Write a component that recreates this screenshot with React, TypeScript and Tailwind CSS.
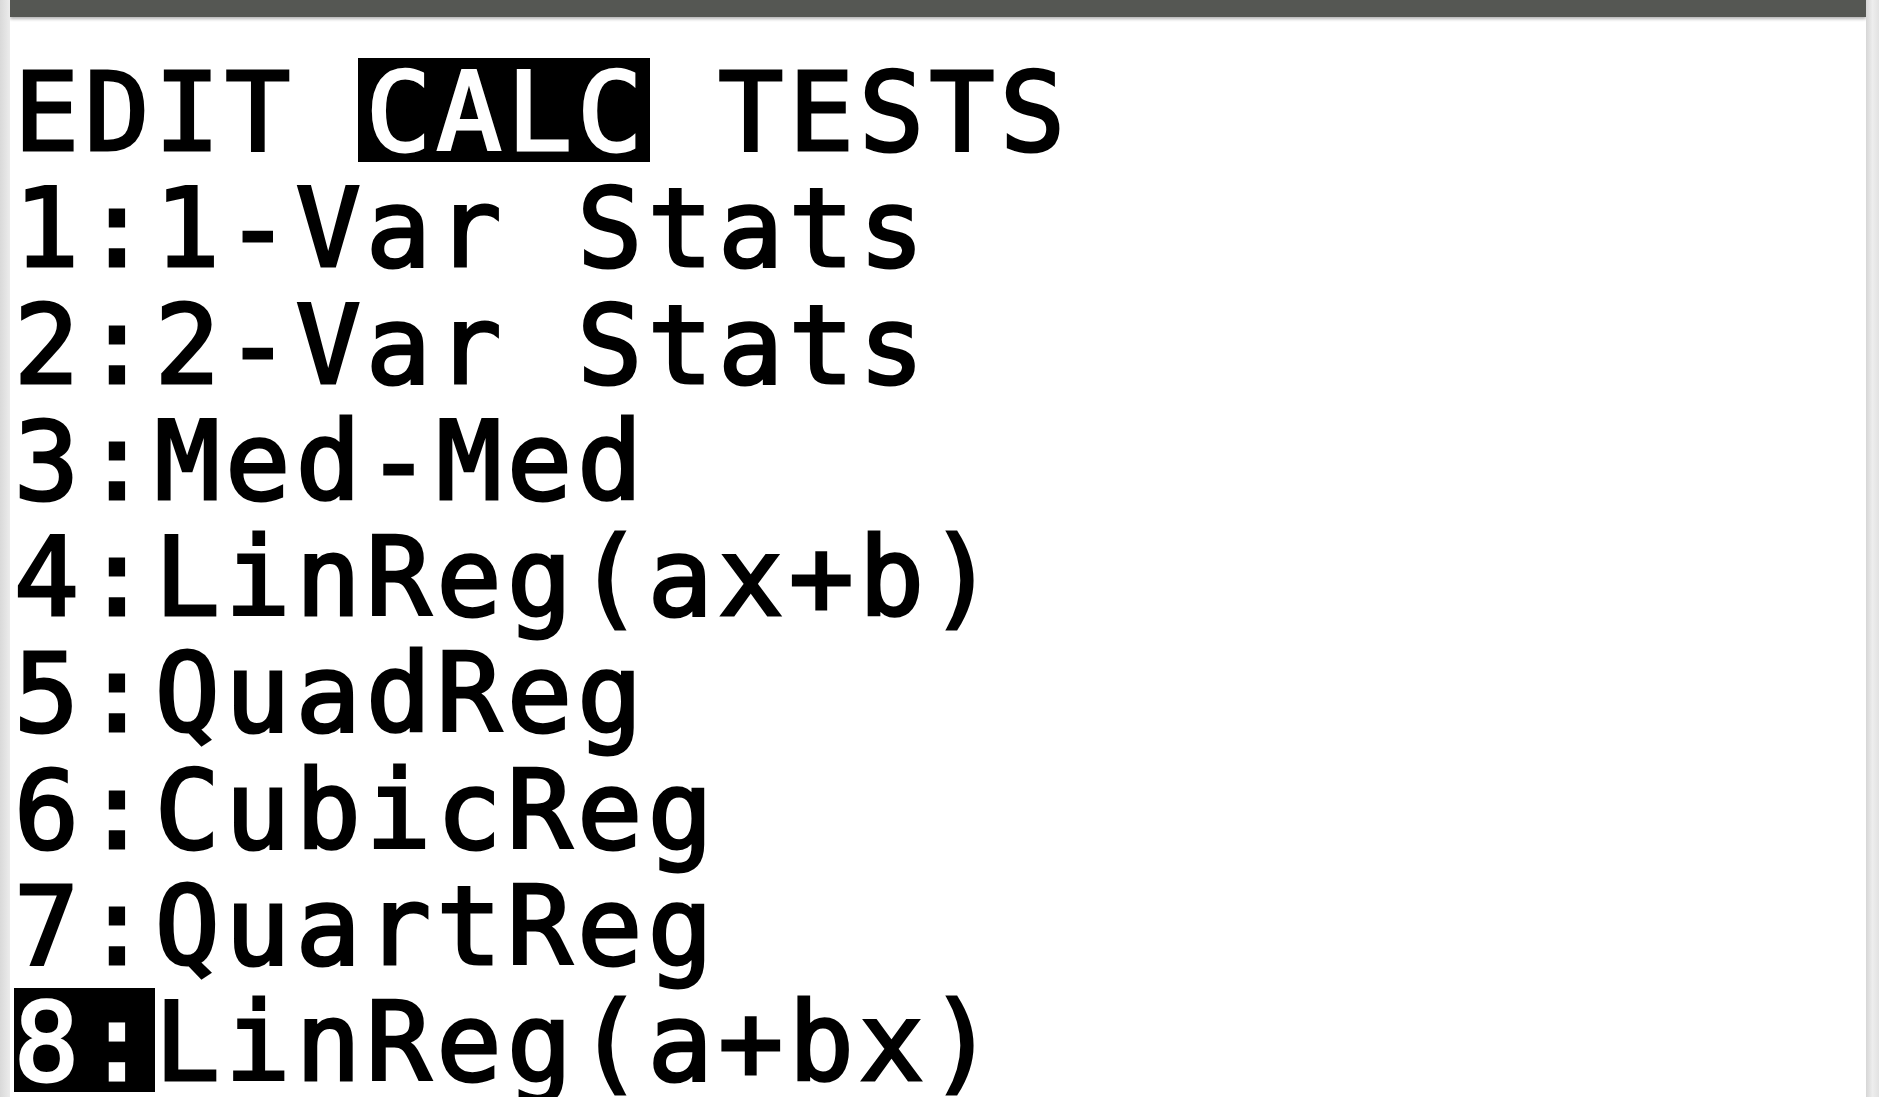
export default function App() {
  const rows = [
    "1-Var Stats",
    "2-Var Stats",
    "Med-Med",
    "LinReg(ax+b)",
    "QuadReg",
    "CubicReg",
    "QuartReg",
  ];
  return (
    <div className="flex h-[1097px] w-[1879px] overflow-hidden bg-[#e4e4e4]">
      <div className="w-[10px] shrink-0 bg-gradient-to-r from-[#d9d9d9] to-[#ececec]" />
      <div className="flex min-w-0 flex-1 flex-col overflow-hidden bg-white">
        <div className="h-[17px] shrink-0 bg-[#555753] shadow-[0_2px_3px_rgba(0,0,0,0.3)]" />
        <div className="shrink-0 whitespace-pre pl-[4px] pt-[38px] font-['DejaVu_Sans_Mono',monospace] text-[108px] leading-[116.3px] tracking-[5.4px] text-black [-webkit-text-stroke:3px_currentcolor]">
          <div>
            {"EDIT "}
            <span className="-ml-[8px] -mr-[2px] inline-block h-[104px] bg-black pl-[8px] pr-[2px] align-baseline leading-[110.3px] text-white">
              CALC
            </span>
            {" TESTS"}
          </div>
          {rows.map((r, i) => (
            <div key={r}>
              {i + 1}:{r}
            </div>
          ))}
          <div>
            <span className="inline-block h-[104px] bg-black align-baseline leading-[110.3px] text-white">8:</span>
            LinReg(a+bx)
          </div>
        </div>
      </div>
      <div className="w-[13px] shrink-0 bg-gradient-to-r from-[#d6d6d6] via-[#ededed] to-[#e2e2e2]" />
    </div>
  );
}
